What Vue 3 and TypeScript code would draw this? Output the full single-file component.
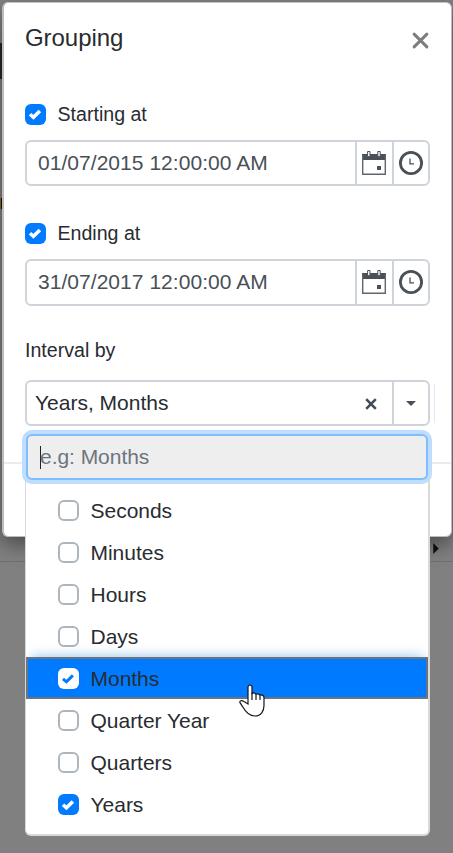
<script setup lang="ts">
import { ref } from 'vue'

interface DateField {
  label: string
  value: string
  enabled: boolean
}

interface IntervalOption {
  name: string
  checked: boolean
}

const dates = ref<DateField[]>([
  { label: 'Starting at', value: '01/07/2015 12:00:00 AM', enabled: true },
  { label: 'Ending at', value: '31/07/2017 12:00:00 AM', enabled: true },
])

const options = ref<IntervalOption[]>([
  { name: 'Seconds', checked: false },
  { name: 'Minutes', checked: false },
  { name: 'Hours', checked: false },
  { name: 'Days', checked: false },
  { name: 'Months', checked: true },
  { name: 'Quarter Year', checked: false },
  { name: 'Quarters', checked: false },
  { name: 'Years', checked: true },
])

const active = ref('Months')
</script>

<template>
  <div class="screen">
    <div class="backdrop">
      <i class="strip dark"></i>
      <i class="strip gold"></i>
      <i class="rule"></i>
      <svg class="scroll-arrow" viewBox="0 0 6 12"><path d="M0 0L6 6L0 12Z" /></svg>
    </div>

    <section class="modal">
      <header class="head">
        <h1>Grouping</h1>
        <svg class="close" viewBox="0 0 16 16"><path d="M2 2L14 14M14 2L2 14" /></svg>
      </header>

      <div class="body">
        <div v-for="d in dates" :key="d.label" class="field">
          <div class="check-row" @click="d.enabled = !d.enabled">
            <span class="box" :class="{ on: d.enabled }">
              <svg v-if="d.enabled" viewBox="0 0 21 21"><path d="M5 10.3L8.4 13.3L14.9 6.9" /></svg>
            </span>
            <span class="caption">{{ d.label }}</span>
          </div>
          <div class="group">
            <div class="value">{{ d.value }}</div>
            <div class="addon">
              <svg class="cal" viewBox="0 0 24 24">
                <path class="fill" d="M0 3H24V9H0Z" />
                <path class="frame" d="M.7 4V23.3H23.3V4" />
                <path class="ring" d="M5.6 .5H8V5.7H5.6ZM15.8 .5H18.2V5.7H15.8Z" />
                <path class="fill" d="M15 15H19V19H15Z" />
              </svg>
            </div>
            <div class="addon last">
              <svg class="clock" viewBox="0 0 24 24">
                <circle cx="12" cy="12" r="10.6" />
                <path d="M11 7.5V12.8H15" />
              </svg>
            </div>
          </div>
        </div>

        <div class="label">Interval by</div>
        <div class="group">
          <div class="value combo">
            <span>Years, Months</span>
            <svg class="clear" viewBox="0 0 12 12"><path d="M1.2 1.2L10.8 10.8M10.8 1.2L1.2 10.8" /></svg>
          </div>
          <div class="addon last">
            <svg class="caret" viewBox="0 0 10 5"><path d="M0 0H10L5 5Z" /></svg>
          </div>
        </div>
        <i class="edge"></i>
      </div>
      <footer class="foot"></footer>
    </section>

    <div class="popup">
      <div class="search"><i class="cursor"></i>e.g: Months</div>
      <ul>
        <li
          v-for="o in options"
          :key="o.name"
          :class="{ active: o.name === active }"
          @click="o.checked = !o.checked"
        >
          <span class="box" :class="{ on: o.checked }">
            <svg v-if="o.checked" viewBox="0 0 21 21"><path d="M5 10.8L8.4 13.8L14.9 7.4" /></svg>
          </span>
          <span class="name">{{ o.name }}</span>
        </li>
      </ul>
    </div>

    <svg class="pointer" viewBox="0 0 26 34">
      <path
        d="M9 20V3.3Q9 1 11 1Q13 1 13 3.3V9.5Q15 8.2 17 10.2Q19 9.2 21 11Q24.8 10.5 25 13.5V21.5C25 27 22 32 16 32C9.5 32 6 27 3.7 22.8L1 18.7C.2 16.8 2.5 15.8 5 17.5Z"
      />
      <path class="fingers" d="M13 9V16M17 10V16M21 11V16" />
    </svg>
  </div>
</template>

<style>
body {
  margin: 0;
  overflow: hidden;
}
</style>

<style scoped>
* {
  box-sizing: border-box;
}
.screen {
  position: relative;
  width: 453px;
  height: 853px;
  padding: 2px 1px 0 2px;
  overflow: hidden;
  background: #808080;
  color: #282c31;
  font-family: 'Liberation Sans', Arial, sans-serif;
  font-size: 21px;
  line-height: 24px;
}
svg {
  display: block;
  fill: none;
}
.backdrop {
  position: absolute;
  inset: 0;
}
.strip {
  position: absolute;
  left: 0;
  width: 2px;
}
.dark {
  top: 43px;
  height: 36px;
  background: #25282c;
}
.gold {
  top: 198px;
  height: 11px;
  border-left: 1px solid #8a6b20;
  background: #15120a;
}
.rule {
  position: absolute;
  top: 561px;
  left: 0;
  width: 100%;
  height: 1px;
  background: #6f6f6f;
}
.scroll-arrow {
  position: absolute;
  left: 433px;
  top: 543px;
  width: 6px;
  height: 11px;
  fill: #111;
}
.modal {
  position: relative;
  display: flex;
  flex-direction: column;
  height: 535px;
  background: #fff;
  border: 1px solid #bcbcbc;
  border-left-width: 2px;
  border-top-color: #c4c4c4;
  border-radius: 6px;
  box-shadow: 0 8px 20px rgba(0, 0, 0, 0.42);
}
.head {
  display: flex;
  justify-content: space-between;
  align-items: flex-start;
  height: 101px;
  padding: 21px 22px 0 21px;
}
h1 {
  margin: 0;
  font-size: 24px;
  line-height: 28px;
  font-weight: 400;
  letter-spacing: -0.05px;
}
.close {
  width: 17px;
  height: 17px;
  margin-top: 8px;
  stroke: #7d7d7d;
  stroke-width: 2.8;
  stroke-linecap: round;
}
.body {
  position: relative;
  display: flex;
  flex-direction: column;
  height: 360px;
  padding: 0 21px;
  border-bottom: 2px solid #e9ecef;
}
.field {
  height: 119px;
}
.check-row {
  display: flex;
  align-items: center;
  gap: 11.5px;
  height: 21px;
  margin-bottom: 15px;
  font-size: 19.6px;
}
.caption {
  margin-top: -2px;
}
.box {
  flex: none;
  width: 21px;
  height: 21px;
  border: 2px solid #adb5bd;
  border-radius: 6px;
  background: #fff;
}
.box.on {
  border: 0;
  background: #007bff;
}
.box svg {
  width: 21px;
  height: 21px;
  stroke: #fff;
  stroke-width: 3.5;
}
.group {
  display: flex;
  width: 405px;
  height: 46px;
  border: 2px solid #ced4da;
  border-radius: 6px;
}
.field + .field .group {
  height: 47px;
}
.field + .field .value,
.field + .field .addon {
  padding-bottom: 1px;
}
.value {
  flex: 1;
  display: flex;
  align-items: center;
  padding-left: 11px;
  color: #495057;
  letter-spacing: 0.04px;
}
.combo {
  justify-content: space-between;
  padding: 0 15px 0 8px;
  color: #282c31;
  letter-spacing: 0;
}
.clear {
  width: 12px;
  height: 12px;
  margin-top: 1px;
  stroke: #444b52;
  stroke-width: 2.6;
}
.addon {
  display: flex;
  align-items: center;
  justify-content: center;
  width: 37px;
  padding-right: 1px;
  border-left: 2px solid #ced4da;
}
.addon.last {
  width: 36px;
  padding-right: 0;
}
.cal,
.clock {
  flex: none;
  width: 24px;
  height: 24px;
}
.cal .fill {
  fill: #495057;
}
.cal .frame {
  stroke: #60666d;
  stroke-width: 1.4;
}
.cal .ring {
  fill: #fff;
  stroke: #495057;
}
.clock {
  stroke: #495057;
  stroke-width: 2.8;
}
.clock path {
  stroke-width: 1.3;
}
.caret {
  width: 10px;
  height: 5px;
  fill: #495057;
}
.label {
  height: 38px;
  font-size: 19.6px;
  line-height: 16px;
}
.edge {
  position: absolute;
  top: 280px;
  right: 16px;
  width: 1px;
  height: 39px;
  background: #e1ebf6;
}
.popup {
  position: absolute;
  left: 25px;
  top: 432px;
  width: 405px;
  height: 404px;
  padding: 2px 0 0;
  background: #fff;
  border: solid #d9d9d9;
  border-width: 0 2px 2px 1px;
  border-radius: 6px;
}
.search {
  display: flex;
  align-items: center;
  width: 402px;
  height: 46px;
  padding-left: 12px;
  border: 2px solid #80bdff;
  border-radius: 6px;
  background: #eee;
  color: #6c757d;
  letter-spacing: -0.04px;
  box-shadow: 0 0 0 4px #bfdeff;
}
.cursor {
  width: 1px;
  height: 23px;
  margin-right: -1px;
  background: #222;
}
ul {
  list-style: none;
  margin: 9px 0 0;
  padding: 0;
}
li {
  display: flex;
  align-items: center;
  gap: 11.5px;
  height: 42px;
  padding-left: 32px;
}
.name {
  margin-top: 2px;
  letter-spacing: -0.02px;
}
li.active {
  background: #007bff;
  border: 2px solid #6c757d;
  padding-left: 30px;
  box-shadow: 0 -6px 12px -5px rgba(0, 123, 200, 0.4);
  clip-path: inset(-18px 0 0 0);
}
li.active .box {
  background: #fff;
}
li.active .box svg {
  stroke: #007bff;
  stroke-width: 3;
}
.pointer {
  position: absolute;
  left: 238.5px;
  top: 683.5px;
  width: 26px;
  height: 34px;
  fill: #fff;
  stroke: #15151f;
  stroke-width: 1.2;
}
.fingers {
  fill: none;
}
</style>
